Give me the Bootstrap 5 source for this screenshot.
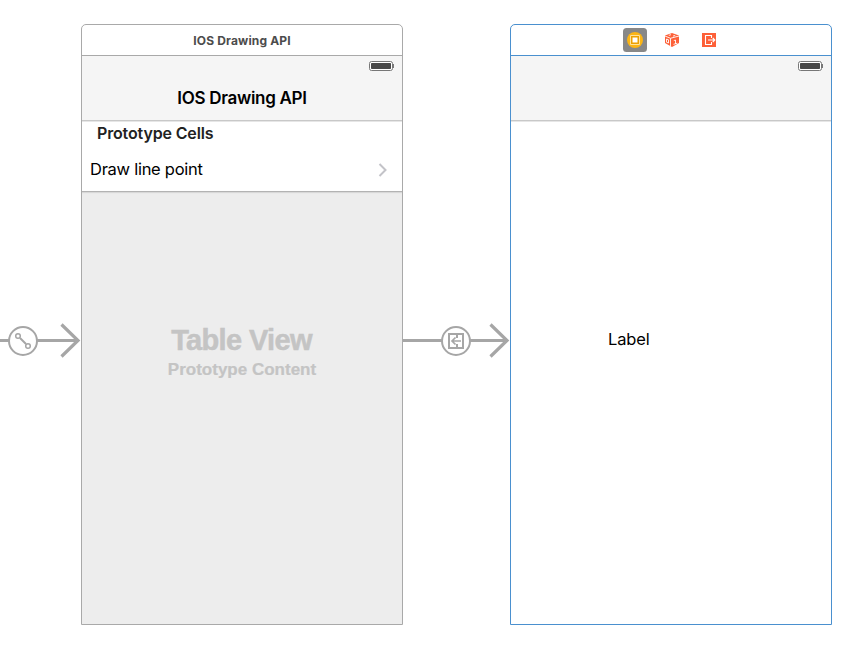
<!DOCTYPE html>
<html lang="en">
<head>
<meta charset="utf-8">
<title>IOS Drawing API</title>
<link href="https://cdn.jsdelivr.net/npm/bootstrap@5.3.0/dist/css/bootstrap.min.css" rel="stylesheet">
<style>
body{font-family:Inter,"Liberation Sans",sans-serif;background:#fff;color:#000;height:648px}
.storyboard{padding-top:24px;width:863px;height:648px}
.scene{width:322px;height:601px;border:1px solid #a9a9a9;border-radius:5px 5px 0 0}
.scene.selected{border-color:#4a90cf}
.scene-title{height:31px;border-bottom:1px solid #a9a9a9;font-size:12px;font-weight:700;color:#4c4c4c;letter-spacing:.15px;padding-top:1px}
.selected .scene-title{border-color:#4a90cf}
.nav-area{height:65px;background:#f5f5f5;border-bottom:1px solid #c8c8c8;box-shadow:0 1px #e6e6e6}
.status-row{height:20px;padding:4px 7px 0 0}
.nav-heading{height:44px;font-size:17px;font-weight:600;line-height:44px;letter-spacing:-.3px}
.cells-head{height:24px;line-height:24px;padding-left:15px;font-size:16px;font-weight:600;color:#222;letter-spacing:-.15px}
.cell-row{height:47px;padding:3px 15px 0 8px;font-size:16.5px;letter-spacing:-.27px;border-bottom:1px solid #b3b3b3;box-shadow:0 1px 1px #d8d8d8;position:relative}
.table-area{background:#ededed;color:#c4c4c4;font-family:"Liberation Sans",sans-serif;font-weight:700;padding-top:131px}
.table-name{font-size:29px;line-height:34px;letter-spacing:-.65px;padding-right:1px;-webkit-text-stroke:.5px #c4c4c4}
.table-kind{font-size:17px;line-height:26px;-webkit-text-stroke:.2px #c4c4c4}
.view-label{font-size:16.5px;line-height:24px;letter-spacing:-.15px;margin:206px 0 0 97px}
.scene-title.dock{gap:13px;padding:0 0 0 2px}
.dock svg,.segue,.status-row svg,.cell-row svg{display:block}
.segue{margin-top:291px}
</style>
</head>
<body class="overflow-hidden">
<main class="storyboard d-flex align-items-start">
  <svg class="segue flex-shrink-0" width="81" height="50" fill="none" stroke="#a6a6a6">
    <path d="M0 25.5H9M37 25.5H77" stroke-width="3"/>
    <path d="M61.5 9.5L78 25.5L61.5 41.5" stroke-width="3.2"/>
    <circle cx="23" cy="26" r="14" stroke-width="2"/>
    <circle cx="18" cy="21" r="2.3" stroke-width="1.5"/>
    <circle cx="28" cy="31" r="2.3" stroke-width="1.5"/>
    <path d="M20 23L26 29" stroke-width="2"/>
  </svg>

  <section class="scene d-flex flex-column flex-shrink-0 overflow-hidden">
    <div class="scene-title d-flex align-items-center justify-content-center flex-shrink-0"><span>IOS Drawing API</span></div>
    <div class="nav-area flex-shrink-0">
      <div class="status-row d-flex justify-content-end">
        <svg width="27" height="12"><rect x="1.5" y="1.5" width="23" height="9" rx="2" fill="#fff" stroke="#777"/><rect x="3" y="3" width="20" height="6" rx=".7" fill="#484848"/><path d="M25.5 4v4" stroke="#777" stroke-width="1"/></svg>
      </div>
      <div class="nav-heading text-center">IOS Drawing API</div>
    </div>
    <div class="cells-head flex-shrink-0">Prototype Cells</div>
    <div class="cell-row d-flex align-items-center justify-content-between flex-shrink-0">
      <span>Draw line point</span>
      <svg width="9" height="14" fill="none" stroke="#c3c3c8" stroke-width="2"><path d="M1.5 1L7.5 7L1.5 13"/></svg>
    </div>
    <div class="table-area flex-grow-1 text-center">
      <div class="table-name">Table View</div>
      <div class="table-kind">Prototype Content</div>
    </div>
  </section>

  <svg class="segue flex-shrink-0" width="107" height="50" fill="none" stroke="#a6a6a6">
    <path d="M0 25.5H39M67 25.5H103" stroke-width="3"/>
    <path d="M87.5 9.5L104 25.5L87.5 41.5" stroke-width="3.2"/>
    <circle cx="53" cy="26" r="14" stroke-width="2"/>
    <path d="M46 19H60V33H46ZM54 19V23M54 29V33" stroke-width="2"/>
    <path d="M58 26H49M52.5 22.5L49 26L52.5 29.5" stroke-width="1.7"/>
  </svg>

  <section class="scene selected d-flex flex-column flex-shrink-0 overflow-hidden">
    <div class="scene-title dock d-flex align-items-center justify-content-center flex-shrink-0">
      <svg width="24" height="24"><rect width="24" height="24" rx="3.5" fill="#888"/><circle cx="12" cy="12" r="8" fill="#fbb516"/><path d="M7.5 7.5h9v9h-9z" fill="#eda000" stroke="#ffe39c"/><path d="M9.5 9.5h5v5h-5z" fill="#fff"/></svg>
      <svg width="24" height="24"><path d="M5 7.5L12 5L19 7.5V15L12 19L5 15Z" fill="#fd6038"/><path d="M5 8L10.5 10.3L19 8M10.5 10.3V18.5" fill="none" stroke="#fff" stroke-width=".9"/><path d="M6.5 11L8.5 11.8V15L6.5 14.2ZM13.8 12.6L15.5 12V16M13.5 16.3L17.3 15.2M8.8 7.4L11 6.7M13 8.1L15.2 7.5" fill="none" stroke="#fff" stroke-width=".9"/></svg>
      <svg width="24" height="24"><path d="M5 5h14v14H5z" fill="#fd6038"/><path d="M14.5 10V7.5H8.5V16.5H14.5V14M11 12H18M15.8 10L17.8 12L15.8 14" fill="none" stroke="#fff" stroke-width="1.1"/></svg>
    </div>
    <div class="nav-area flex-shrink-0">
      <div class="status-row d-flex justify-content-end">
        <svg width="27" height="12"><rect x="1.5" y="1.5" width="23" height="9" rx="2" fill="#fff" stroke="#777"/><rect x="3" y="3" width="20" height="6" rx=".7" fill="#484848"/><path d="M25.5 4v4" stroke="#777" stroke-width="1"/></svg>
      </div>
    </div>
    <div class="view-label">Label</div>
  </section>
</main>
<script src="https://cdn.jsdelivr.net/npm/bootstrap@5.3.0/dist/js/bootstrap.bundle.min.js"></script>
</body>
</html>
